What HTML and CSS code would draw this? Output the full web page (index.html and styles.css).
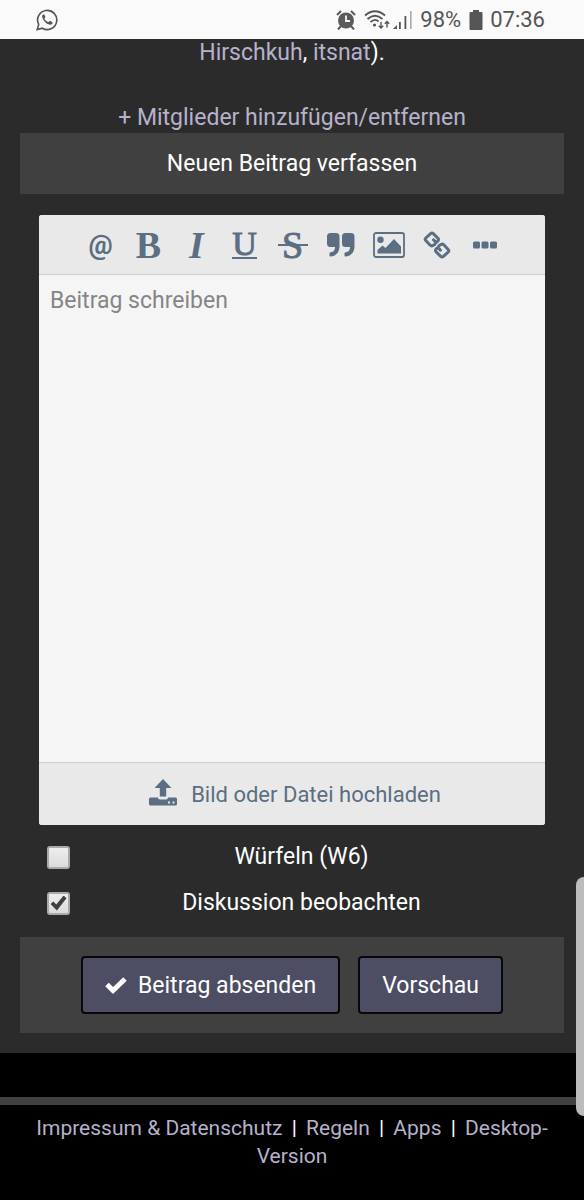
FILE: index.html
```html
<!DOCTYPE html>
<html lang="de">
<head>
<meta charset="utf-8">
<meta name="viewport" content="width=device-width, initial-scale=1">
<title>Neuen Beitrag verfassen</title>
<link rel="stylesheet" href="styles.css">
</head>
<body>
<header class="status">
  <svg class="status-app" viewBox="0 0 22 22" width="22" height="22" fill="none" stroke="#555" stroke-width="1.6"><path d="M1.2 20.6l1.5-5.2A9.6 9.6 0 1 1 6.300 19.200z"/><path d="M7 5.500c-3 2 2.500 10.500 7.500 10.200 2-.2 2.500-2 1.700-2.700l-2.400-1.300-1.500 1.500C10.500 12.600 9 11 8.400 9.500l1-1.400-1-2.500z" fill="#555" stroke="none"/></svg>
  <div class="status-right">
    <svg viewBox="0 0 20 20" width="20" height="20" fill="#5b5b5b"><circle cx="10" cy="10.500" r="8"/><path d="M1 5l4-4M19 5l-4-4M5 16l-3 3.500M15 16l3 3.500" stroke="#5b5b5b" stroke-width="2"/><path d="M10 5.500v5.500h4" fill="none" stroke="#fafafa" stroke-width="1.800"/></svg>
    <svg class="wifi" viewBox="0 0 26 20" width="26" height="20" fill="none" stroke="#555" stroke-width="1.800"><path d="M1 5.500Q11-3 21 5.500M3.500 9Q11 2.500 18.500 9M6.500 12.200Q11 8 14.500 11.500"/><circle cx="10.500" cy="15" r="1.600" fill="#555" stroke="none"/><path d="M17 12v6M14.800 15.800l2.200 2.200 2.200-2.200M23 17.500v-6M20.800 13.700L23 11.500l2.200 2.200" stroke-width="1.400"/></svg>
    <svg class="signal" viewBox="0 0 19 20" width="19" height="20" fill="#555"><path d="M0 19l4-4v4zM6 12h1.800v7H6zM11.500 6h1.800v13h-1.800z"/><path d="M17 1h1.600v18H17z" fill="#aaa"/></svg>
    <span>98%</span>
    <svg class="battery" viewBox="0 0 14 20" width="14" height="20" fill="#555"><path d="M4 0h6v2h2.500q1 0 1 1V19q0 1-1 1h-11q-1 0-1-1V3q0-1 1-1H4z"/></svg>
    <time>07:36</time>
  </div>
</header>
<main class="content">
  <p class="members"><a href="#">Hirschkuh</a>, <a href="#">itsnat</a>).</p>
  <p class="add"><a href="#">+ Mitglieder hinzufügen/entfernen</a></p>
  <h2 class="panel-title">Neuen Beitrag verfassen</h2>
  <form class="compose">
    <div class="editor">
      <div class="toolbar" role="toolbar" aria-label="Formatierung">
        <button type="button" class="tool at" aria-label="Erwähnen">@</button>
        <button type="button" class="tool bold" aria-label="Fett">B</button>
        <button type="button" class="tool italic" aria-label="Kursiv">I</button>
        <button type="button" class="tool under" aria-label="Unterstrichen"><span>U</span></button>
        <button type="button" class="tool strike" aria-label="Durchgestrichen"><span>S</span></button>
        <button type="button" class="tool" aria-label="Zitat"><svg viewBox="0 0 28 24" width="28" height="24" fill="currentColor"><path id="q" d="M3.500 0H9q3.500 0 3.500 3.500V13c0 6-3 10-9 10.500q-1 0-1-1v-2q0-1 1-1.200C7 19 8 16.500 8 14H3.500Q0 14 0 10.500v-7Q0 0 3.500 0z"/><use href="#q" x="15"/></svg></button>
        <button type="button" class="tool" aria-label="Bild"><svg viewBox="0 0 32 26" width="32" height="26" fill="currentColor"><rect x="1" y="1" width="30" height="24" rx="2" fill="none" stroke="currentColor" stroke-width="1.800"/><circle cx="7.500" cy="7.800" r="3.200"/><path d="M4.500 21.500v-3.500l5-4.500 3 2.500 8.500-9 7 7.500v7z"/></svg></button>
        <button type="button" class="tool" aria-label="Link"><svg viewBox="0 0 28 28" width="28" height="28" fill="none" stroke="currentColor" stroke-width="3" stroke-linejoin="round" stroke-linecap="round"><path d="M10.500 8.800L13 11.600 15 9.800q1-1.400 0-2.500L10.300 2.600Q9 1.500 7.600 2.600L2.800 7Q1.600 8.300 2.800 9.600l4.400 4.600q1.300 1.200 2.800.3L12 13.200"/><path d="M17.500 19.200L15 16.400 13 18.200q-1 1.400 0 2.500l4.700 4.700q1.300 1.100 2.700 0l4.800-4.400q1.200-1.300 0-2.600l-4.400-4.600q-1.300-1.200-2.800-.3L16 14.800"/></svg></button>
        <button type="button" class="tool" aria-label="Mehr"><svg viewBox="0 0 24 8" width="24" height="8" fill="currentColor"><rect y=".5" width="7" height="7" rx="1.500"/><rect x="8.500" y=".5" width="7" height="7" rx="1.500"/><rect x="17" y=".5" width="7" height="7" rx="1.500"/></svg></button>
      </div>
      <textarea class="text" aria-label="Beitrag schreiben" placeholder="Beitrag schreiben"></textarea>
      <button type="button" class="upload"><svg viewBox="0 0 28 27" width="28" height="27" fill="currentColor"><path d="M14 0l8.500 9h-5.300v8.500h-6.400V9H5.500zM1.500 18.500H9q0 2 2 2h6q2 0 2-2h7.500q1.500 0 1.500 1.500v5q0 1.500-1.500 1.500h-25Q0 26.500 0 25v-5q0-1.500 1.500-1.500z"/><path d="M19 22.500h2v2h-2zM23.500 22.500h2v2h-2z" fill="#e9e9e9"/></svg><span>Bild oder Datei hochladen</span></button>
    </div>
    <div class="option"><input type="checkbox" id="dice"><label for="dice">Würfeln (W6)</label></div>
    <div class="option"><input type="checkbox" id="watch" checked><label for="watch">Diskussion beobachten</label></div>
    <div class="actions">
      <button type="submit" class="btn"><svg viewBox="0 0 22 17" width="22" height="17" fill="none" stroke="currentColor" stroke-width="5"><path d="M2 7.500l6 6L20 2"/></svg><span>Beitrag absenden</span></button>
      <button type="button" class="btn"><span>Vorschau</span></button>
    </div>
  </form>
</main>
<footer class="footer"><a href="#">Impressum &amp; Datenschutz</a> <i>|</i> <a href="#">Regeln</a> <i>|</i> <a href="#">Apps</a> <i>|</i> <a href="#">Desktop-Version</a></footer>
<div class="scroll-thumb"></div>
</body>
</html>
```

FILE: styles.css
```css
* { box-sizing: border-box; }
body {
  margin: 0;
  min-height: 100vh;
  background: #000;
  color: #fff;
  font: 23px/28px Roboto, sans-serif;
  text-align: center;
}
a { color: #b6b2cb; text-decoration: none; }
p, h2 { margin: 0; }
svg { flex: none; }
button { font: inherit; cursor: pointer; }

.status {
  display: flex;
  align-items: center;
  justify-content: space-between;
  height: 39px;
  padding: 0 39px 0 36px;
  background: #fafafa;
  color: #555;
  font-size: 22px;
}
.status-right { display: flex; align-items: center; }
.wifi { margin-left: 8px; }
.signal { margin: 0 8px 0 3px; }
.battery { margin: 0 7px 0 8px; }

.content { padding-bottom: 20px; background: #2b2b2b; }
.members { padding-top: 2px; line-height: 24px; }
.add { padding: 39px 0 1px; }
.panel-title {
  margin: 0 20px;
  padding: 17px 0 16px;
  background: #404040;
  font-size: 23px;
  font-weight: 400;
}

.editor {
  display: flex;
  flex-direction: column;
  margin: 21px 39px 9px;
  border-radius: 3px;
  overflow: hidden;
  background: #f5f5f5;
  color: #5b6e82;
}
.toolbar {
  display: flex;
  justify-content: center;
  height: 60px;
  padding-left: 1px;
  border-bottom: 1px solid #cfcfcf;
  background: #e9e9e9;
}
.tool {
  display: flex;
  align-items: center;
  justify-content: center;
  width: 48px;
  padding: 0;
  border: 0;
  background: none;
  color: inherit;
}
.at { font: 700 27px/32px Roboto, sans-serif; }
.bold { font: 700 38px/40px "Liberation Serif", serif; }
.italic { font: italic 700 38px/40px "Liberation Serif", serif; }
.under, .strike { font: 34px/26px "Liberation Serif", serif; }
.under span {
  border-bottom: 2px solid;
  -webkit-text-stroke: 1px;
}
.strike span {
  width: 30px;
  background: linear-gradient(currentColor, currentColor) center / 100% 2px no-repeat;
  -webkit-text-stroke: 1px;
}
.strike { font-size: 38px; }
.text {
  display: block;
  width: 100%;
  height: 487px;
  padding: 12px 11px;
  border: 0;
  background: #f5f5f5;
  color: #444;
  font: inherit;
  resize: none;
  outline: 0;
}
.text::placeholder { color: #858585; }
.upload {
  display: flex;
  align-items: center;
  justify-content: center;
  gap: 14px;
  height: 63px;
  padding: 0 0 4px 6px;
  border: 0;
  border-top: 1px solid #cfcfcf;
  background: #e9e9e9;
  color: inherit;
  font-size: 22px;
}
.upload span { padding-top: 6px; }

.option {
  display: flex;
  align-items: center;
  height: 46px;
  padding: 0 51px 0 47px;
}
.option label { flex: 1; }
.option input {
  display: grid;
  place-items: center;
  appearance: none;
  width: 23px;
  height: 23px;
  margin: 0;
  border: 2px solid #aaa;
  border-radius: 3px;
  background: linear-gradient(#eee, #dcdcdc);
}
.option input:checked::after {
  content: "";
  width: 16px;
  height: 15px;
  background: #404040;
  clip-path: polygon(0 56%, 18% 40%, 36% 60%, 82% 0, 100% 18%, 40% 100%);
}

.actions {
  display: flex;
  justify-content: center;
  gap: 18px;
  margin: 11px 20px 0;
  padding: 19px;
  background: #404040;
}
.btn {
  display: flex;
  align-items: center;
  gap: 11px;
  height: 58px;
  padding: 0 22px;
  border: 2px solid #08080c;
  border-radius: 4px;
  background: #4d4d63;
  color: #fff;
}
.btn span { padding-top: 2px; }

.footer {
  margin-top: 44px;
  padding: 9px 30px 30px;
  border-top: 8px solid #414141;
  font-size: 21px;
}
.footer i { margin: 0 4px; font-style: normal; }

.scroll-thumb {
  position: absolute;
  top: 877px;
  right: 0;
  width: 8px;
  height: 239px;
  border-radius: 8px 0 0 8px;
  background: #bcbcbc;
}
```
